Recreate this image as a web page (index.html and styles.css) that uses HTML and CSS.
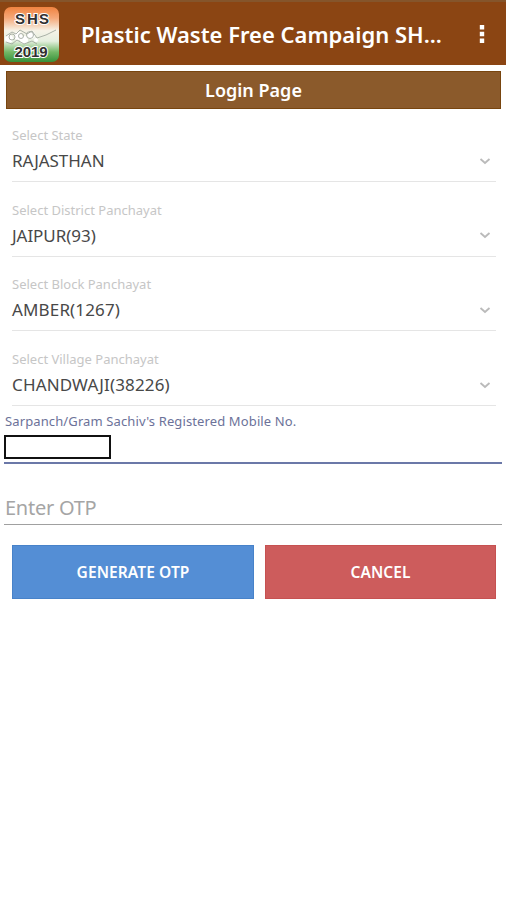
FILE: index.html
```html
<!DOCTYPE html>
<html lang="en">
<head>
<meta charset="utf-8">
<title>Plastic Waste Free Campaign</title>
<link rel="stylesheet" href="styles.css">
</head>
<body>
<header class="bar">
  <svg class="logo" width="58" height="58" viewBox="0 0 58 58">
    <defs>
      <linearGradient id="flag" x1="0" y1="0" x2="0" y2="1">
        <stop offset="0" stop-color="#f08340"/><stop offset=".2" stop-color="#f5a878"/>
        <stop offset=".43" stop-color="#f6f3e8"/><stop offset=".62" stop-color="#e5efdf"/>
        <stop offset=".82" stop-color="#72b866"/><stop offset="1" stop-color="#35913a"/>
      </linearGradient>
    </defs>
    <rect x="1" y="1" width="55" height="55" rx="7" fill="url(#flag)"/>
    <g fill="#fff"><circle cx="6" cy="33" r="4"/><circle cx="15" cy="30" r="4"/><circle cx="21" cy="34" r="4"/><circle cx="28" cy="29" r="4"/><circle cx="33" cy="34" r="2"/></g>
    <g fill="none" stroke="#a3aaa0" stroke-width=".9">
      <path d="M3 30l6-4 4 2 4-4 7 4 5-3 5 7 9-3 10-5M3 36l6 2 5-4 7 4 8-3 5 3"/>
      <circle cx="9" cy="31" r="3"/><circle cx="18" cy="30" r="2.500"/><circle cx="27" cy="29" r="3.500"/>
    </g>
    <g class="logo-text"><text x="12" y="18">S</text><text x="24" y="18">H</text><text x="36" y="18">S</text><text x="11.500" y="51" textLength="33">2019</text></g>
  </svg>
  <h1 class="title">Plastic Waste Free Campaign SH...</h1>
  <svg class="more" width="8" height="20" viewBox="0 0 8 20"><path d="M1.800 1h4.400v4.400H1.800zM1.800 7.800h4.400v4.400H1.800zM1.800 14.600h4.400V19H1.800z"/></svg>
</header>
<main>
  <h2 class="banner">Login Page</h2>
  <div class="fields">
    <div class="field"><span class="label">Select State</span><div class="value"><span>RAJASTHAN</span><svg class="chev" viewBox="0 0 12 8"><path d="M1.500 2L6 6l4.500-4"/></svg></div></div>
    <div class="field"><span class="label">Select District Panchayat</span><div class="value"><span>JAIPUR(93)</span><svg class="chev" viewBox="0 0 12 8"><path d="M1.500 2L6 6l4.500-4"/></svg></div></div>
    <div class="field"><span class="label">Select Block Panchayat</span><div class="value"><span class="wide">AMBER(1267)</span><svg class="chev" viewBox="0 0 12 8"><path d="M1.500 2L6 6l4.500-4"/></svg></div></div>
    <div class="field"><span class="label">Select Village Panchayat</span><div class="value"><span class="wide">CHANDWAJI(38226)</span><svg class="chev" viewBox="0 0 12 8"><path d="M1.500 2L6 6l4.500-4"/></svg></div></div>
  </div>
  <div class="mobile"><span class="mobile-label">Sarpanch/Gram Sachiv's Registered Mobile No.</span><div class="redacted"></div></div>
  <div class="otp"><span>Enter OTP</span></div>
  <div class="actions"><div class="btn generate"><span>GENERATE OTP</span></div><div class="btn cancel"><span>CANCEL</span></div></div>
</main>
</body>
</html>
```

FILE: styles.css
```css
* { box-sizing: border-box; }
body { margin: 0; background: #fff; font-family: "Noto Sans", sans-serif; }
h1, h2 { margin: 0; }
span { white-space: nowrap; }
.bar { height: 65px; background: #8b4513; border-top: 2px solid #85552b; display: flex; align-items: center; padding: 0 20px 0 3px; }
.logo { flex: none; margin-top: 2px; }
.logo-text { font: bold 15px "Liberation Sans", sans-serif; fill: #303030; stroke: #fff; stroke-width: 2px; paint-order: stroke; }
.title { margin: 0 0 0 20px; flex: 1; font-size: 22px; line-height: 30px; font-weight: 600; color: #fff; white-space: nowrap; }
.more { flex: none; fill: #fff; }
.banner { margin: 6px 5px 0 6px; height: 38px; border: 1px solid #78450f; background: #8b5a2b; color: #fff; font-size: 18px; font-weight: 600; display: flex; align-items: center; justify-content: center; }
.fields { margin: 0 10px 0 12px; padding-top: 16px; }
.field { height: 74.700px; }
.label { display: block; height: 20px; line-height: 20px; font-size: 13px; color: #c6c6c6; }
.value { height: 37px; padding: 3px 5px 8px 0; border-bottom: 1px solid #e5e5e5; display: flex; align-items: center; justify-content: space-between; font-size: 17px; letter-spacing: -.05px; color: #484848; }
.wide { letter-spacing: .15px; }
.chev { width: 12px; height: 8px; fill: none; stroke: #bababa; stroke-width: 1.800; }
.mobile { margin: -12px 4px 0; height: 52px; border-bottom: 2px solid #6b78a8; }
.mobile-label { display: block; height: 23px; line-height: 18px; padding-left: 1px; font-size: 13px; letter-spacing: .12px; color: #6c7299; }
.redacted { width: 107px; height: 24px; border: 2px solid #111; }
.otp { margin: 0 4px; height: 61px; padding: 30px 0 0 1px; border-bottom: 1px solid #a0a0a0; font-size: 20px; line-height: 28px; letter-spacing: -.25px; color: #a5a5a5; }
.actions { display: grid; grid-template-columns: 242px 231px; gap: 11px; margin: 20px 0 0 12px; }
.btn { height: 54px; padding-top: 1px; display: flex; align-items: center; justify-content: center; color: #fff; font-size: 15.500px; font-weight: 600; letter-spacing: .1px; }
.generate { background: #548ed5; border: 1px solid #4782c9; }
.cancel { background: #cd5c5c; border: 1px solid #c65151; }
```
